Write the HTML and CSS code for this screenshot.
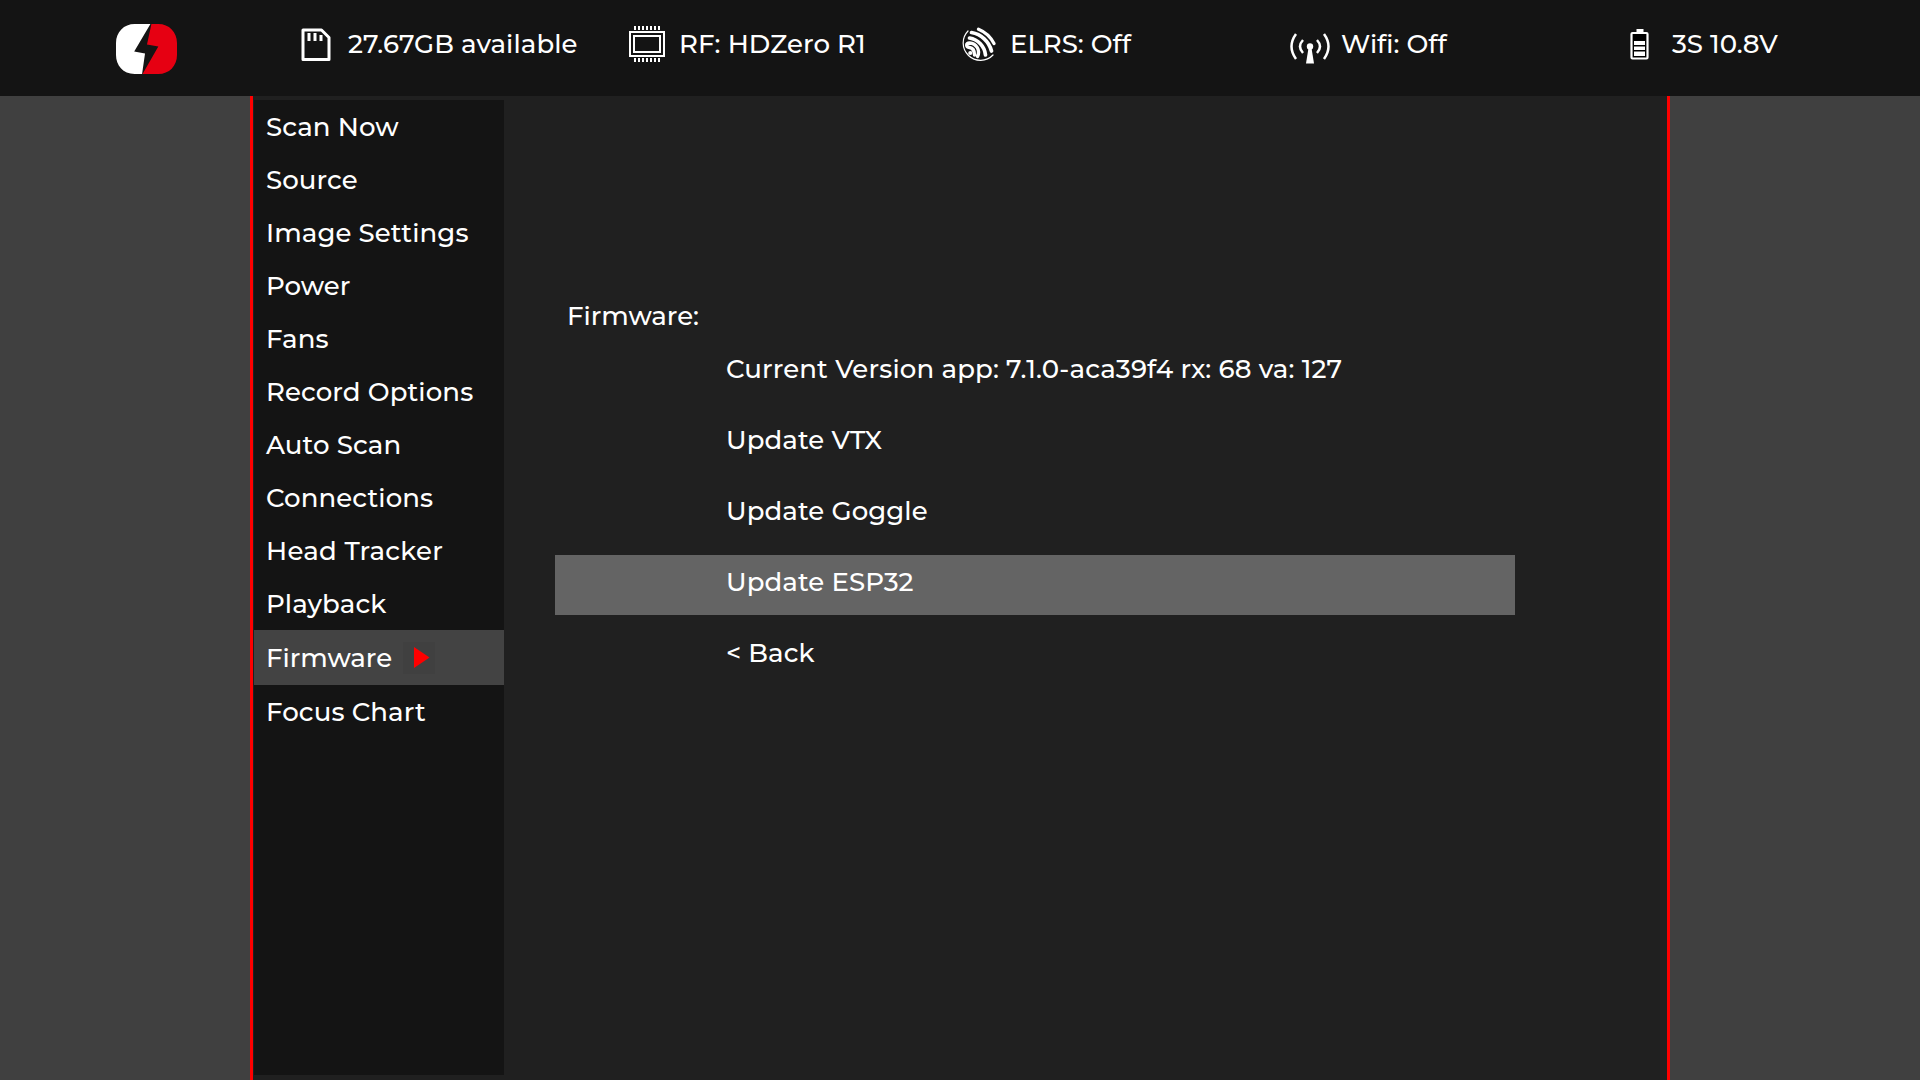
FILE: index.html
```
<!DOCTYPE html>
<html lang="en">
<head>
<meta charset="utf-8">
<title>HDZero Goggle</title>
<link rel="stylesheet" href="styles.css">
</head>
<body>
<header class="topbar">
  <svg class="logo" viewBox="0 0 62 50" preserveAspectRatio="none" aria-hidden="true">
    <path fill="#fff" d="M19 0H35L18.500 27.500 29.500 29.500 26.500 50H19C7 50 0 41 0 31V19C0 8 8 0 19 0Z"/>
    <path fill="#e60012" d="M36 0H43C54 0 62 8 62 19V31C62 42 54 50 43 50H27L43 22.500 31.500 20.500Z"/>
  </svg>
  <div class="status storage">
    <svg class="icon-sd" viewBox="0 0 30 34" aria-hidden="true">
      <path fill="none" stroke="#fff" stroke-width="3" stroke-linejoin="round" d="M2 2H20.500L28 9.500V31.500H2Z"/>
      <path stroke="#fff" stroke-width="3" d="M8 5V13M14 5V13M20 7V13"/>
    </svg>
    <span class="label">27.67GB available</span>
  </div>
  <div class="status rf">
    <svg class="icon-chip" viewBox="0 0 36 36" aria-hidden="true">
      <path fill="none" stroke="#fff" stroke-width="2" d="M1 6H35V30H1ZM5 10H31V26H5Z"/>
      <path stroke="#fff" stroke-width="2" d="M6 0V4M10 0V4M14 0V4M18 0V4M22 0V4M26 0V4M30 0V4M6 32V36M10 32V36M14 32V36M18 32V36M22 32V36M26 32V36M30 32V36"/>
    </svg>
    <span class="label">RF: HDZero R1</span>
  </div>
  <div class="status elrs">
    <svg class="icon-elrs" viewBox="0 0 34 34" aria-hidden="true">
      <g fill="none" stroke="#fff" stroke-linecap="round">
        <path stroke-width="1.200" d="M6 4A16.300 16.300 0 0 0 31 28"/>
        <path stroke-width="3.200" d="M16.500 2.200A30 30 0 0 1 32 16.500"/>
        <path stroke-width="3.700" d="M9.500 5.500A25 25 0 0 1 29.500 24"/>
        <path stroke-width="3.700" d="M7.500 11A19.300 19.300 0 0 1 23.500 28"/>
        <path stroke-width="3.400" d="M15.500 29.500C18.500 23 14.500 16.500 7.500 16 3.500 16 4 20 7.500 20.500 10.500 21 12.500 23 12.500 28"/>
      </g>
      <circle cx="8.300" cy="26" r="2.100" fill="#fff"/>
    </svg>
    <span class="label">ELRS: Off</span>
  </div>
  <div class="status wifi">
    <svg class="icon-wifi" viewBox="0 0 40 31" aria-hidden="true">
      <g fill="none" stroke="#fff" stroke-width="2.500">
        <path d="M6 1Q-3 13.500 6 26M34 1Q43 13.500 34 26M13 7Q7 13.500 13 20M27 7Q33 13.500 27 20"/>
      </g>
      <circle cx="20" cy="13.500" r="3.200" fill="#fff"/>
      <path fill="#fff" d="M18.500 15H21.500L24 30.500H16Z"/>
    </svg>
    <span class="label">Wifi: Off</span>
  </div>
  <div class="status battery">
    <svg class="icon-battery" viewBox="0 0 20 32" aria-hidden="true">
      <rect x="2" y="4" width="16" height="26" fill="#000"/>
      <path fill="#fff" d="M6.500 0H13.500V4H6.500ZM4 12H15V16H4ZM4 17.500H15V21H4ZM4 22.500H15V27H4Z"/>
      <rect x="1.500" y="4" width="16" height="25.500" rx="1" fill="none" stroke="#fff" stroke-width="2.200"/>
    </svg>
    <span class="label">3S 10.8V</span>
  </div>
</header>
<div class="panel">
  <nav class="menu">
    <a class="item">Scan Now</a>
    <a class="item">Source</a>
    <a class="item">Image Settings</a>
    <a class="item">Power</a>
    <a class="item">Fans</a>
    <a class="item">Record Options</a>
    <a class="item">Auto Scan</a>
    <a class="item">Connections</a>
    <a class="item loose">Head Tracker</a>
    <a class="item">Playback</a>
    <a class="item active"><span class="name">Firmware</span><svg class="arrow" viewBox="0 0 32 32" aria-hidden="true"><path fill="#f00" d="M11 5V26L26.500 15.500Z"/></svg></a>
    <a class="item">Focus Chart</a>
  </nav>
  <main class="page">
    <h1 class="title">Firmware:</h1>
    <ul class="rows">
      <li class="row version">Current Version app: 7.1.0-aca39f4 rx: 68 va: 127</li>
      <li class="row">Update VTX</li>
      <li class="row">Update Goggle</li>
      <li class="row selected">Update ESP32</li>
      <li class="row">&lt; Back</li>
    </ul>
  </main>
</div>
</body>
</html>
```
FILE: styles.css
```
* { box-sizing: border-box; }
body {
  margin: 0;
  width: 1920px;
  height: 1080px;
  overflow: hidden;
  display: flex;
  flex-direction: column;
  background: #404040;
  color: #fff;
  font: 500 26px/55px Montserrat, Inter, sans-serif;
  white-space: nowrap;
}
svg { display: block; flex: none; }

.topbar {
  display: grid;
  grid-template-columns: 184px 328px 333px 328px 340px 1fr;
  height: 96px;
  padding-left: 116px;
  background: #141414;
}
.logo { width: 61px; height: 50px; margin: 24px 0 0 .4px; }
.status { display: flex; align-items: flex-start; height: 73px; padding-top: 17px; }
.icon-sd { width: 30px; height: 34px; margin: 11px 17px 0 1px; }
.icon-chip { width: 36px; height: 36px; margin: 9px 14px 0 1px; }
.icon-elrs { width: 34px; height: 34px; margin: 10px 14px 0 1px; }
.icon-wifi { width: 40px; height: 31px; margin: 16px 11px 0 1px; }
.icon-battery { width: 20px; height: 32px; margin: 12px 22px 0 1px; }
.storage, .rf { letter-spacing: .08px; }

.panel {
  display: flex;
  flex: 1;
  width: 1420px;
  margin-left: 250px;
  border: solid #f00;
  border-width: 0 3px;
  background: #202020;
}
.menu { width: 250px; height: 975px; margin: 4px 0 0 1px; background: #141414; }
.item { display: flex; height: 53px; padding-left: 12px; letter-spacing: .1px; }
.item.loose { letter-spacing: .3px; }
.item.active { height: 55px; padding-top: 1px; background: #434343; letter-spacing: 0; }
.name { width: 137px; }
.arrow { width: 32px; height: 32px; margin-top: 11px; background: #404040; }

.page { width: 960px; margin-left: 51px; padding-top: 193px; }
.title { height: 53px; margin: 0; padding-left: 12px; font: inherit; }
.rows { display: grid; gap: 11px; margin: 0; padding: 0; list-style: none; }
.row { height: 60px; padding-left: 171px; letter-spacing: .1px; }
.row.version { letter-spacing: .15px; }
.selected { background: #646464; }
```
